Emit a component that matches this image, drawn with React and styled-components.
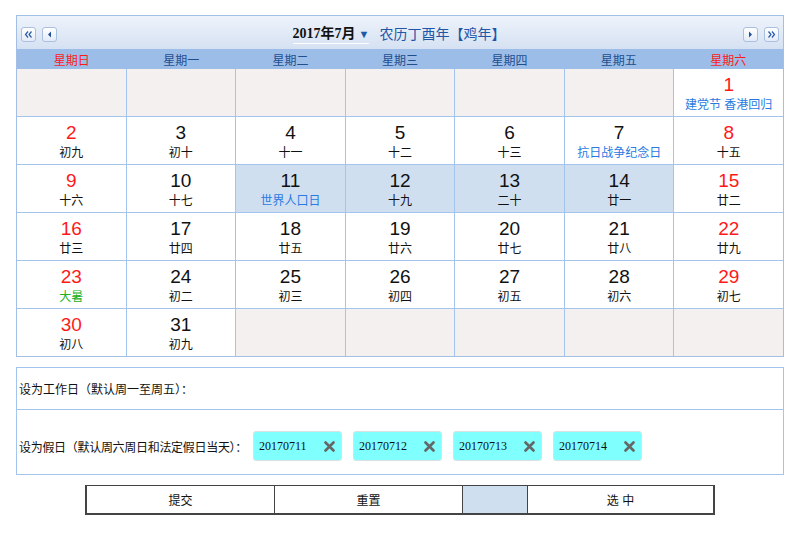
import React from "react";
import styled, { createGlobalStyle } from "styled-components";

const Global = createGlobalStyle`
  body { margin: 0; background: #fff; font-family: "Liberation Sans", "Noto Sans CJK SC", sans-serif; }
`;

const Page = styled.div`
  padding: 15px 16px 0 16px;
  width: 768px;
`;

const Calendar = styled.div`
  border: 1px solid #a3bfe6;
  border-bottom: none;
`;

const Header = styled.div`
  height: 33px;
  background: linear-gradient(#eef3fb, #d5e1f2);
  display: flex;
  align-items: center;
  padding: 0 4px;
  gap: 6px;
`;

const NavBtn = styled.div`
  width: 13px;
  height: 13px;
  border: 1px solid #a9c0e0;
  border-radius: 3px;
  background: linear-gradient(#ffffff, #e3ebf7);
  display: flex;
  align-items: center;
  justify-content: center;
  margin-top: 4px;
`;

const Title = styled.div`
  flex: 1;
  display: flex;
  justify-content: center;
  align-items: center;
  gap: 6px;
  margin-right: 2px;
`;

const Month = styled.span`
  font-family: "Liberation Serif", "Noto Sans CJK SC", serif;
  font-weight: bold;
  font-size: 14px;
  color: #111;
  border-bottom: 1px solid #fff;
  padding-bottom: 1px;
`;

const Arrow = styled.span`
  color: #1f56a8;
  font-size: 11px;
  margin-left: 3px;
`;

const Lunar = styled.span`
  color: #1f56a8;
  font-size: 14px;
  margin-left: 4px;
`;

const Weekdays = styled.div`
  display: grid;
  grid-template-columns: repeat(7, 1fr);
  background: #9dbde9;
  height: 20px;
  align-items: center;
`;

const Weekday = styled.div`
  text-align: center;
  font-size: 12px;
  color: ${(p) => (p.$weekend ? "#ff1a1a" : "#1e4f8f")};
`;

const Grid = styled.div`
  display: grid;
  grid-template-columns: repeat(7, 1fr);
  grid-auto-rows: 47px;
  gap: 1px;
  background: #a3c4ec;
  border-bottom: 1px solid #a3bfe6;
`;

const Cell = styled.div`
  background: ${(p) => (p.$empty ? "#f4f0f0" : p.$sel ? "#cfdff0" : "#fff")};
  display: flex;
  flex-direction: column;
  align-items: center;
  padding-top: 6px;
`;

const Num = styled.div`
  font-size: 19px;
  line-height: 20px;
  color: ${(p) => (p.$red ? "#ff1a1a" : "#111")};
`;

const Sub = styled.div`
  font-size: 12px;
  line-height: 16px;
  margin-top: 2px;
  color: ${(p) => (p.$tone === "blue" ? "#2a7ae2" : p.$tone === "green" ? "#22b022" : "#111")};
`;

const Settings = styled.div`
  margin-top: 10px;
  border: 1px solid #a3c4ec;
`;

const SetRow = styled.div`
  height: ${(p) => p.$h}px;
  box-sizing: border-box;
  padding-top: ${(p) => p.$pt || 0}px;
  display: flex;
  align-items: center;
  padding-left: 2px;
  gap: 11px;
  font-size: 12px;
  color: #111;
  & + & { border-top: 1px solid #a3c4ec; }
`;

const Label = styled.span`
  width: 223px;
  white-space: nowrap;
  letter-spacing: -0.3px;
`;

const Tag = styled.div`
  width: 89px;
  height: 30px;
  box-sizing: border-box;
  background: #80ffff;
  border: 1px solid #d8e2e2;
  border-radius: 3px;
  display: flex;
  align-items: center;
  justify-content: space-between;
  padding: 0 6px 0 5px;
  font-family: "Liberation Serif", serif;
  font-size: 12px;
  color: #111;
`;

const Buttons = styled.div`
  margin: 10px auto 0;
  width: 630px;
  height: 30px;
  box-sizing: border-box;
  border: 2px solid #444;
  border-top-width: 1px;
  display: grid;
  grid-template-columns: 187px 188px 65px 1fr;
`;

const Btn = styled.div`
  display: flex;
  align-items: center;
  justify-content: center;
  font-size: 12px;
  color: #111;
  background: ${(p) => (p.$blank ? "#cfdff0" : "#fff")};
  & + & { border-left: 1px solid #444; }
`;

const Icon = ({ d }) => (
  <svg width="9" height="9" viewBox="0 0 9 9">{d}</svg>
);

const Cross = () => (
  <svg width="11" height="11" viewBox="0 0 11 11">
    <path d="M1.5 1.5 L9.5 9.5 M9.5 1.5 L1.5 9.5" stroke="#666" strokeWidth="2.6" strokeLinecap="round" />
  </svg>
);

const weekdays = ["星期日", "星期一", "星期二", "星期三", "星期四", "星期五", "星期六"];

const days = [
  ...Array(6).fill(null),
  { n: 1, s: "建党节 香港回归", t: "blue" },
  { n: 2, s: "初九" }, { n: 3, s: "初十" }, { n: 4, s: "十一" }, { n: 5, s: "十二" }, { n: 6, s: "十三" }, { n: 7, s: "抗日战争纪念日", t: "blue" }, { n: 8, s: "十五" },
  { n: 9, s: "十六" }, { n: 10, s: "十七" }, { n: 11, s: "世界人口日", t: "blue", sel: 1 }, { n: 12, s: "十九", sel: 1 }, { n: 13, s: "二十", sel: 1 }, { n: 14, s: "廿一", sel: 1 }, { n: 15, s: "廿二" },
  { n: 16, s: "廿三" }, { n: 17, s: "廿四" }, { n: 18, s: "廿五" }, { n: 19, s: "廿六" }, { n: 20, s: "廿七" }, { n: 21, s: "廿八" }, { n: 22, s: "廿九" },
  { n: 23, s: "大暑", t: "green" }, { n: 24, s: "初二" }, { n: 25, s: "初三" }, { n: 26, s: "初四" }, { n: 27, s: "初五" }, { n: 28, s: "初六" }, { n: 29, s: "初七" },
  { n: 30, s: "初八" }, { n: 31, s: "初九" }, null, null, null, null, null,
];

export default function App() {
  return (
    <Page>
      <Global />
      <Calendar>
        <Header>
          <NavBtn>
            <Icon d={<path d="M4 1.5 L1.5 4.5 L4 7.5 M7.5 1.5 L5 4.5 L7.5 7.5" stroke="#2a5aa8" strokeWidth="1.2" fill="none" />} />
          </NavBtn>
          <NavBtn>
            <Icon d={<path d="M6 1.5 L3 4.5 L6 7.5 Z" fill="#1f4f96" />} />
          </NavBtn>
          <Title>
            <Month>2017年7月<Arrow>▼</Arrow></Month>
            <Lunar>农历丁酉年【鸡年】</Lunar>
          </Title>
          <NavBtn>
            <Icon d={<path d="M3 1.5 L6 4.5 L3 7.5 Z" fill="#1f4f96" />} />
          </NavBtn>
          <NavBtn>
            <Icon d={<path d="M1.5 1.5 L4 4.5 L1.5 7.5 M5 1.5 L7.5 4.5 L5 7.5" stroke="#2a5aa8" strokeWidth="1.2" fill="none" />} />
          </NavBtn>
        </Header>
        <Weekdays>
          {weekdays.map((w, i) => (
            <Weekday key={w} $weekend={i === 0 || i === 6}>{w}</Weekday>
          ))}
        </Weekdays>
        <Grid>
          {days.map((d, i) =>
            d ? (
              <Cell key={i} $sel={d.sel}>
                <Num $red={i % 7 === 0 || i % 7 === 6}>{d.n}</Num>
                <Sub $tone={d.t}>{d.s}</Sub>
              </Cell>
            ) : (
              <Cell key={i} $empty />
            )
          )}
        </Grid>
      </Calendar>
      <Settings>
        <SetRow $h={41}>设为工作日（默认周一至周五）：</SetRow>
        <SetRow $h={65} $pt={8}>
          <Label>设为假日（默认周六周日和法定假日当天）：</Label>
          {["20170711", "20170712", "20170713", "20170714"].map((t) => (
            <Tag key={t}>{t}<Cross /></Tag>
          ))}
        </SetRow>
      </Settings>
      <Buttons>
        <Btn>提交</Btn>
        <Btn>重置</Btn>
        <Btn $blank />
        <Btn>选 中</Btn>
      </Buttons>
    </Page>
  );
}
